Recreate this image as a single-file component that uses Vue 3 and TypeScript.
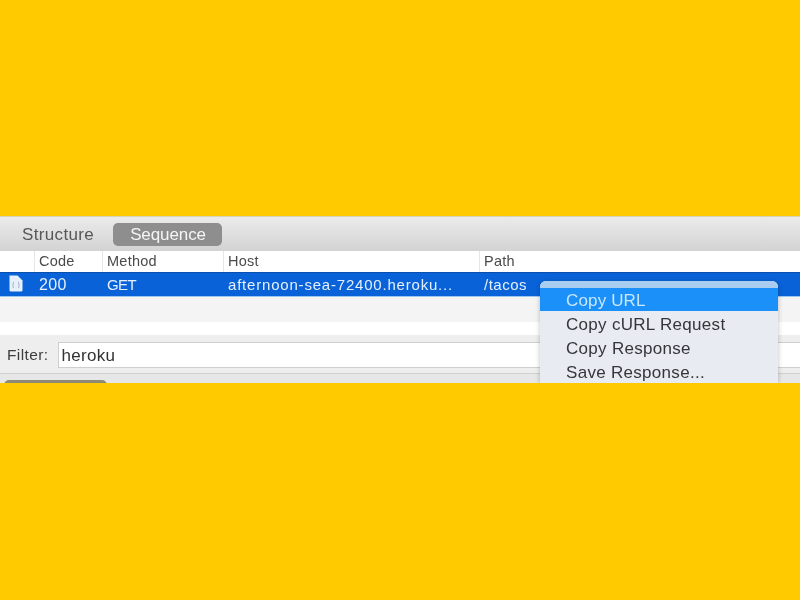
<script setup lang="ts">
const columns = [
  { name: '', width: 34 },
  { name: 'Code', width: 68 },
  { name: 'Method', width: 121 },
  { name: 'Host', width: 256 },
  { name: 'Path', width: 321 },
]
const menu = ['Copy URL', 'Copy cURL Request', 'Copy Response', 'Save Response...']
</script>

<template>
  <main class="page">
    <section class="panel">
      <nav class="tabs">
        <span class="tab">Structure</span>
        <span class="tab active">Sequence</span>
      </nav>
      <div class="head">
        <span v-for="c in columns" :key="c.name" class="hcell" :style="{ width: c.width + 'px' }">{{ c.name }}</span>
      </div>
      <div class="row">
        <span class="cell" :style="{ width: columns[0].width + 'px' }">
          <svg class="doc" width="15" height="17" viewBox="0 0 15 17">
            <path d="M1.5 0.5H9.5L14.5 5.5V15a1.5 1.5 0 0 1-1.5 1.5H3A1.5 1.5 0 0 1 1.5 15Z" fill="#e6f0fb" />
            <path d="M6 7C5 7 5.3 8.5 5.3 9S5 10 4.6 10.200C5 10.400 5.300 11 5.300 11.500S5 13 6 13M10 7C11 7 10.700 8.500 10.700 9S11 10 11.400 10.200C11 10.400 10.700 11 10.700 11.500S11 13 10 13" fill="none" stroke="#8c9cb0" stroke-width="0.8" />
          </svg>
        </span>
        <span class="cell code" :style="{ width: columns[1].width + 'px' }">200</span>
        <span class="cell method" :style="{ width: columns[2].width + 'px' }">GET</span>
        <span class="cell wide" :style="{ width: columns[3].width + 'px' }">afternoon-sea-72400.heroku...</span>
        <span class="cell path" :style="{ width: columns[4].width + 'px' }">/tacos</span>
      </div>
      <div class="stripe grey"></div>
      <div class="stripe white"></div>
      <div class="divider"></div>
      <div class="filter">
        <label class="flabel">Filter:</label>
        <div class="finput">heroku</div>
      </div>
      <div class="foot"><span class="footbtn"></span></div>
      <ul class="menu">
        <li v-for="(m, i) in menu" :key="m" class="item" :class="{ sel: i === 0 }">{{ m }}</li>
      </ul>
    </section>
  </main>
</template>

<style scoped>
.page {
  width: 800px;
  height: 600px;
  background: #ffcb00;
  padding-top: 216px;
  box-sizing: border-box;
  font-family: "Liberation Sans", Arial, sans-serif;
}
.panel {
  position: relative;
  height: 167px;
  overflow: hidden;
  background: #efefef;
  filter: blur(0.4px);
}
.tabs {
  height: 35px;
  box-sizing: border-box;
  padding: 6px 0 0 13px;
  display: flex;
  align-items: flex-start;
  gap: 10px;
  background: linear-gradient(#ebebeb, #d3d3d3);
  border-top: 1px solid #d9d3b5;
}
.tab {
  height: 23px;
  line-height: 24px;
  padding: 0 8px 0 9px;
  font-size: 17px;
  letter-spacing: 0.35px;
  color: #575757;
  border-radius: 5px;
}
.tab.active {
  padding: 0 16px 0 17px;
  margin-left: 1px;
  background: #8e8e8e;
  color: #f5f5f5;
  letter-spacing: -0.1px;
}
.head {
  display: flex;
  height: 21px;
  background: #fff;
}
.hcell {
  box-sizing: border-box;
  padding-left: 4px;
  font-size: 14.500px;
  letter-spacing: 0.25px;
  line-height: 21px;
  color: #4a4a4a;
  border-left: 1px solid #e6e6e6;
}
.hcell:first-child {
  border-left: 0;
}
.row {
  display: flex;
  height: 25px;
  background: #0a62d8;
  border-top: 1px solid #0b4fae;
  border-bottom: 1px solid #9fc6ee;
  box-sizing: border-box;
}
.cell {
  box-sizing: border-box;
  padding-left: 5px;
  font-size: 15px;
  line-height: 24px;
  color: #e4f0fd;
  white-space: nowrap;
}
.cell.code {
  font-size: 16px;
  letter-spacing: 0.4px;
}
.cell.method {
  font-size: 15px;
  letter-spacing: -0.6px;
}
.cell.wide {
  letter-spacing: 0.8px;
}
.cell.path {
  letter-spacing: 0.5px;
}
.doc {
  display: block;
  margin: 2px 0 0 3px;
}
.stripe.grey {
  height: 25px;
  background: #f4f4f4;
}
.stripe.white {
  height: 13px;
  background: #fff;
}
.divider {
  height: 7px;
  background: #eeeeee;
}
.filter {
  display: flex;
  align-items: flex-start;
  height: 32px;
  box-sizing: border-box;
  padding-left: 7px;
  gap: 9px;
  background: #eeeeee;
  border-bottom: 1px solid #cfcfcf;
}
.flabel {
  font-size: 15.500px;
  letter-spacing: 0.4px;
  line-height: 25px;
  color: #3d3d3d;
}
.finput {
  flex: 1;
  height: 26px;
  box-sizing: border-box;
  padding-left: 3px;
  background: #fff;
  border: 1px solid #cfcfcf;
  border-right: 0;
  font-size: 17px;
  letter-spacing: 0.3px;
  line-height: 25px;
  color: #333;
}
.foot {
  height: 9px;
  padding: 6px 0 0 4px;
  background: #e7e7e7;
}
.footbtn {
  display: block;
  width: 103px;
  height: 10px;
  border-radius: 5px 5px 0 0;
  background: #8f8a74;
}
.menu {
  position: absolute;
  left: 540px;
  top: 65px;
  width: 238px;
  margin: 0;
  padding: 7px 0 0;
  list-style: none;
  background: #e9ebf2;
  border-radius: 6px 6px 0 0;
  box-shadow: 0 1px 5px rgba(0, 0, 0, 0.25);
}
.menu::before {
  content: "";
  position: absolute;
  inset: 0 0 auto 0;
  height: 7px;
  border-radius: 6px 6px 0 0;
  background: #a9cdf0;
}
.item {
  height: 24px;
  padding-left: 26px;
  font-size: 17px;
  letter-spacing: 0.3px;
  line-height: 28px;
  color: #35363a;
}
.item.sel {
  height: 23px;
  line-height: 26px;
  background: #1a90f8;
  color: #c9e6fb;
  letter-spacing: 0.15px;
}
</style>

<style>
body {
  margin: 0;
}
</style>
